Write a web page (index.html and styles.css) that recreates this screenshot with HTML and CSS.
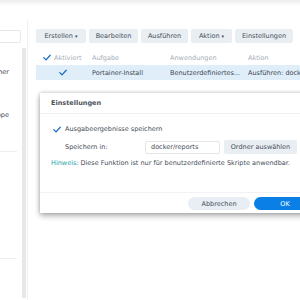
FILE: index.html
```html
<!DOCTYPE html>
<html lang="de">
<head>
<meta charset="utf-8">
<title>Aufgabenplaner</title>
<link rel="stylesheet" href="styles.css">
</head>
<body>
<div class="topshade"></div>
<div class="app">
  <aside class="side">
    <div class="search"></div>
    <div class="navitem first"><span>Portainer</span></div>
    <div class="navitem second"><span>Gruppe</span></div>
    <div class="navsep"></div>
    <div class="navsep low"></div>
  </aside>
  <div class="scroll"></div>
  <div class="divider"></div>
  <main class="main">
    <div class="toolbar">
      <button class="btn">Erstellen <span class="caret">▾</span></button>
      <button class="btn">Bearbeiten</button>
      <button class="btn">Ausführen</button>
      <button class="btn">Aktion <span class="caret">▾</span></button>
      <button class="btn">Einstellungen</button>
    </div>
    <div class="table">
      <div class="row head">
        <div class="cell c1"><svg class="chk" viewBox="0 0 10 8"><path d="M1 4.2 L3.8 7 L9 1.2"/></svg>Aktiviert</div>
        <div class="cell">Aufgabe</div>
        <div class="cell">Anwendungen</div>
        <div class="cell">Aktion</div>
      </div>
      <div class="row sel">
        <div class="cell c1 center"><svg class="chk" viewBox="0 0 10 8"><path d="M1 4.2 L3.8 7 L9 1.2"/></svg></div>
        <div class="cell">Portainer-Install</div>
        <div class="cell">Benutzerdefiniertes...</div>
        <div class="cell nowrap">Ausführen: docker</div>
      </div>
    </div>
  </main>
</div>

<div class="dialog">
  <div class="dtitle">Einstellungen</div>
  <div class="dbody">
    <div class="line check"><svg class="chk" viewBox="0 0 10 8"><path d="M1 4.2 L3.8 7 L9 1.2"/></svg>Ausgabeergebnisse speichern</div>
    <div class="line save">
      <span class="lbl">Speichern in:</span>
      <div class="input">docker/reports</div>
      <button class="btn obtn">Ordner auswählen</button>
    </div>
    <div class="line hint"><span class="hw">Hinweis:</span> Diese Funktion ist nur für benutzerdefinierte Skripte anwendbar.</div>
  </div>
  <div class="dfoot">
    <button class="pill cancel">Abbrechen</button>
    <button class="pill ok">OK</button>
  </div>
</div>
</body>
</html>
```

FILE: styles.css
```css
* { box-sizing: border-box; }
html, body {
  margin: 0;
  width: 300px;
  height: 300px;
  overflow: hidden;
  background: #fff;
  font-family: "DejaVu Sans", Verdana, sans-serif;
  font-size: 6.5px;
  color: #434c56;
}
.topshade {
  position: absolute;
  left: 0; top: 0;
  width: 300px; height: 6px;
  background: linear-gradient(#ececec, rgba(255,255,255,0));
}
.app {
  display: flex;
  height: 300px;
}
.side {
  width: 22px;
  padding-top: 30px;
  position: relative;
  overflow: hidden;
}
.search {
  height: 13px;
  width: 21px;
  border: 1px solid #e4e8ec;
  border-left: none;
  border-radius: 0 2px 2px 0;
}
.navitem {
  display: flex;
  justify-content: flex-end;
  white-space: nowrap;
  height: 14px;
  align-items: center;
  padding-right: 13px;
  color: #3d454e;
}
.navitem.first { margin-top: 22px; }
.navitem.second { margin-top: 29px; }
.navsep {
  margin-top: 29px;
  width: 17px;
  height: 1px;
  background: #eceff2;
}
.navsep.low { margin-top: 106px; }
.scroll {
  width: 4px;
  margin-top: 48px;
  height: 250px;
  background: #e6e7e8;
}
.divider {
  width: 1px;
  margin-left: 1px;
  margin-top: 20px;
  background: #f0f1f2;
}
.main {
  flex: 1;
  padding: 29px 0 0 8px;
  overflow: hidden;
}
.toolbar {
  display: flex;
  gap: 3px;
  white-space: nowrap;
}
.btn {
  font: inherit;
  color: #444d57;
  height: 14px;
  border: none;
  border-radius: 2px;
  background: #e9eef3;
  padding: 0 4px;
  flex: none;
}
.toolbar .btn:nth-child(1) { width: 50px; }
.toolbar .btn:nth-child(2) { width: 49px; }
.toolbar .btn:nth-child(3) { width: 47px; }
.toolbar .btn:nth-child(4) { width: 41px; }
.toolbar .btn:nth-child(5) { width: 58px; }
.caret { font-size: 5px; }
.table { margin-top: 7px; }
.row {
  display: grid;
  grid-template-columns: 56px 78px 78px 60px;
  height: 15px;
  align-items: center;
  white-space: nowrap;
}
.row.head { color: #a5adb5; height: 15px; }
.row.sel { background: #e0eefa; color: #3c454f; }
.cell { overflow: hidden; }
.cell.nowrap { overflow: visible; }
.c1 { padding-left: 7px; display: flex; align-items: center; }
.c1.center { padding-left: 23px; }
.chk {
  width: 8px; height: 7px;
  margin-right: 3px;
  fill: none;
  stroke: #1a6ec2;
  stroke-width: 1.6;
  stroke-linecap: round;
  stroke-linejoin: round;
}
.dialog {
  position: absolute;
  left: 40px;
  top: 93px;
  width: 290px;
  height: 120px;
  background: #fff;
  box-shadow: 0 0 4px rgba(0,0,0,0.22), 0 3px 6px rgba(0,0,0,0.28);
  display: flex;
  flex-direction: column;
}
.dtitle {
  height: 21px;
  padding: 0 11px;
  display: flex;
  align-items: center;
  font-weight: bold;
  color: #4a525b;
  border-bottom: 1px solid #f0f2f4;
}
.dbody {
  flex: 1;
  padding: 8px 11px 0;
}
.line {
  display: flex;
  align-items: center;
  white-space: nowrap;
}
.line.check { height: 14px; padding-left: 2px; }
.line.check .chk { margin-right: 4px; }
.line.save { margin-top: 4px; height: 14px; padding-left: 14px; }
.lbl { width: 80px; }
.input {
  width: 75px;
  height: 13px;
  border: 1px solid #e2e6ea;
  border-radius: 2px;
  padding-left: 5px;
  display: flex;
  align-items: center;
}
.obtn { width: 73px; margin-left: 4px; padding: 0; }
.line.hint { margin-top: 2px; height: 14px; }
.hw { color: #1aa3a9; margin-right: 2px; }
.dfoot {
  height: 21px;
  border-top: 1px solid #f0f2f4;
  display: flex;
  justify-content: flex-end;
  align-items: flex-start;
  gap: 4px;
  padding: 4px 14px 0 0;
}
.pill {
  font: inherit;
  height: 13px;
  border: none;
  border-radius: 7px;
  width: 62px;
}
.cancel { background: #e8eef4; color: #464e57; }
.ok { background: #0a7fe6; color: #fff; }
```
